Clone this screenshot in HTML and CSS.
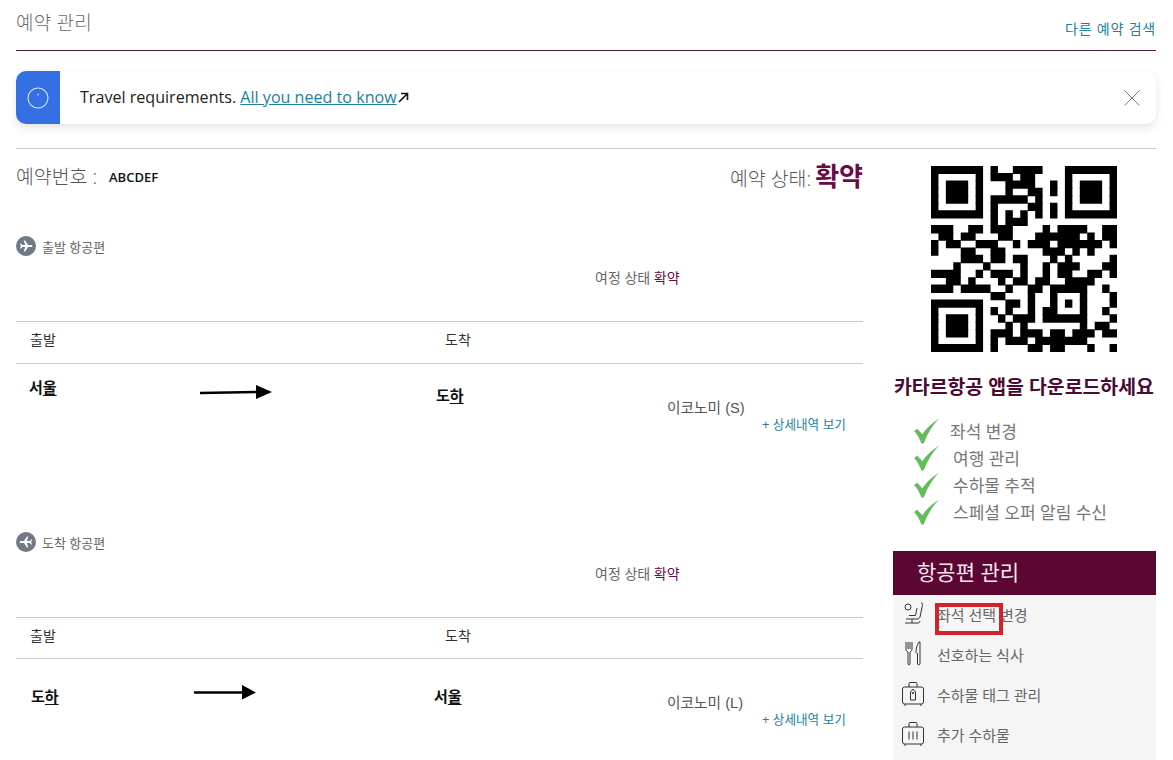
FILE: index.html
```html
<!DOCTYPE html>
<html lang="ko">
    <head>
        <meta charset="utf-8">
        <title>예약 관리</title>
        <link rel="stylesheet" href="styles.css">
    </head>
    <body>
        <div class="top_bar">
            <h1 class="page_title">예약 관리</h1>
            <a class="other_search" href="#">다른 예약 검색</a>
        </div>

        <div class="notice">
            <div class="notice_icon">
                <svg width="22" height="22" viewBox="0 0 22 22" fill="none" stroke="#dbe6fb" stroke-width="1.1"><circle cx="11" cy="11" r="10"/><path d="M11 6.5v2"/></svg>
            </div>
            <p class="notice_text">Travel requirements. <a href="#">All you need to know</a><svg class="ext_arrow" width="11" height="11" viewBox="0 0 11 11" fill="none" stroke="#111" stroke-width="1.6"><path d="M1 10 9.5 1.5M3 1.5h6.5V8"/></svg></p>
            <svg class="notice_close" width="16" height="16" viewBox="0 0 16 16" fill="none" stroke="#777" stroke-width="1"><path d="M.5.5l15 15M15.500.5l-15 15"/></svg>
        </div>

        <div class="columns">
            <div class="main_col">
                <div class="booking_row">
                    <div class="booking_ref"><span class="big_label">예약번호 :</span><b class="ref_code">ABCDEF</b></div>
                    <div class="booking_state"><span class="big_label">예약 상태:</span> <b class="state_value">확약</b></div>
                </div>

                <section class="flight">
                    <div class="flight_label">
                        <svg class="plane_icon" width="20" height="20" viewBox="0 0 20 20"><circle cx="10" cy="10" r="10" fill="#6f7a85"/><path fill="#fff" d="M16.500 10c0-.7-.9-1.100-1.800-1.100h-2.600L9 4.400H7.700l1.500 4.500H6.300L5 7.400H4l.8 2.600L4 12.600h1l1.300-1.500h2.900L7.700 15.600H9l3.100-4.500h2.600c.9 0 1.800-.4 1.800-1.100z"/></svg>
                        출발 항공편
                    </div>
                    <div class="leg_state">여정 상태 <span class="leg_ok">확약</span></div>
                    <div class="leg_head"><span>출발</span><span>도착</span></div>
                    <div class="leg_row">
                        <div class="city">서<u>울</u></div>
                        <svg class="arrow" width="72" height="16" viewBox="0 0 72 16"><path d="M0 9 56 8" stroke="#000" stroke-width="2.500"/><path d="M56 1l16 7-16 7z"/></svg>
                        <div class="city city_low">도<u>하</u></div>
                        <div class="cabin">
                            <div>이코노미 (S)</div>
                            <a class="details" href="#">+ 상세내역 보기</a>
                        </div>
                    </div>
                </section>

                <section class="flight flight_back">
                    <div class="flight_label">
                        <svg class="plane_icon" width="20" height="20" viewBox="0 0 20 20"><circle cx="10" cy="10" r="10" fill="#6f7a85"/><path fill="#fff" d="M3.500 10c0-.7.9-1.100 1.800-1.100h2.600L11 4.400h1.300l-1.500 4.500h2.900L15 7.400h1l-.8 2.600.8 2.600h-1l-1.300-1.500h-2.900l1.500 4.500H11l-3.100-4.500H5.300c-.9 0-1.800-.4-1.800-1.100z"/></svg>
                        도착 항공편
                    </div>
                    <div class="leg_state">여정 상태 <span class="leg_ok">확약</span></div>
                    <div class="leg_head"><span>출발</span><span>도착</span></div>
                    <div class="leg_row leg_row_back">
                        <div class="city">도<u>하</u></div>
                        <svg class="arrow" width="62" height="16" viewBox="0 0 62 16"><path d="M0 8.500h48" stroke="#000" stroke-width="2.500"/><path d="M48 1l14 7.500-14 7z"/></svg>
                        <div class="city">서<u>울</u></div>
                        <div class="cabin">
                            <div>이코노미 (L)</div>
                            <a class="details" href="#">+ 상세내역 보기</a>
                        </div>
                    </div>
                </section>
            </div>

            <aside class="side_col">
                <svg class="qr" width="186" height="186" viewBox="0 0 25 25" fill="none" stroke="#000" stroke-width="1.120">
                    <path d="M0 .5h7M8 .5h1M11 .5h4M18 .5h7"/>
                    <path d="M0 1.500h1M6 1.500h1M8 1.500h3M12 1.500h2M18 1.500h1M24 1.500h1"/>
                    <path d="M0 2.500h1M2 2.500h3M6 2.500h1M10 2.500h4M16 2.500h1M18 2.500h1M20 2.500h3M24 2.500h1"/>
                    <path d="M0 3.500h1M2 3.500h3M6 3.500h1M10 3.500h1M13 3.500h2M16 3.500h1M18 3.500h1M20 3.500h3M24 3.500h1"/>
                    <path d="M0 4.500h1M2 4.500h3M6 4.500h1M8 4.500h5M14 4.500h1M18 4.500h1M20 4.500h3M24 4.500h1"/>
                    <path d="M0 5.500h1M6 5.500h1M8 5.500h1M13 5.500h2M16 5.500h1M18 5.500h1M24 5.500h1"/>
                    <path d="M0 6.500h7M8 6.500h1M10 6.500h1M12 6.500h1M14 6.500h1M16 6.500h1M18 6.500h7"/>
                    <path d="M8 7.500h1M10 7.500h3"/>
                    <path d="M0 8.500h3M5 8.500h2M8 8.500h3M15 8.500h1M17 8.500h4M23 8.500h2"/>
                    <path d="M1 9.500h2M4 9.500h2M9 9.500h2M14 9.500h6M21 9.500h1M23 9.500h2"/>
                    <path d="M0 10.500h1M2 10.500h2M6 10.500h3M11 10.500h1M13 10.500h3M17 10.500h6M24 10.500h1"/>
                    <path d="M0 11.500h1M4 11.500h2M8 11.500h2M15 11.500h3M19 11.500h1M21 11.500h1"/>
                    <path d="M4 12.500h3M8 12.500h2M11 12.500h2M16 12.500h1M18 12.500h1M24 12.500h1"/>
                    <path d="M3 13.500h1M7 13.500h1M12 13.500h1M15 13.500h1M17 13.500h3M23 13.500h2"/>
                    <path d="M0 14.500h4M6 14.500h1M8 14.500h3M12 14.500h1M15 14.500h1M17 14.500h2M21 14.500h2M24 14.500h1"/>
                    <path d="M2 15.500h2M5 15.500h1M9 15.500h1M11 15.500h2M14 15.500h2M18 15.500h4"/>
                    <path d="M0 16.500h3M4 16.500h4M10 16.500h1M13 16.500h2M16 16.500h5M23 16.500h1"/>
                    <path d="M8 17.500h2M13 17.500h1M16 17.500h1M20 17.500h1M24 17.500h1"/>
                    <path d="M0 18.500h7M10 18.500h2M13 18.500h1M16 18.500h1M18 18.500h1M20 18.500h1M24 18.500h1"/>
                    <path d="M0 19.500h1M6 19.500h1M8 19.500h1M10 19.500h1M13 19.500h1M15 19.500h2M20 19.500h1M23 19.500h1"/>
                    <path d="M0 20.500h1M2 20.500h3M6 20.500h1M9 20.500h1M11 20.500h3M15 20.500h6M24 20.500h1"/>
                    <path d="M0 21.500h1M2 21.500h3M6 21.500h1M10 21.500h1M12 21.500h1M20 21.500h1M22 21.500h2"/>
                    <path d="M0 22.500h1M2 22.500h3M6 22.500h1M8 22.500h3M12 22.500h3M16 22.500h2M19 22.500h3M23 22.500h2"/>
                    <path d="M0 23.500h1M6 23.500h1M8 23.500h1M10 23.500h3M14 23.500h7"/>
                    <path d="M0 24.500h7M8 24.500h1M13 24.500h2M16 24.500h2M21 24.500h1M24 24.500h1"/>
                </svg>
                <h2 class="app_title">카타르항공 앱을 다운로드하세요</h2>
                <ul class="app_list">
                    <li><svg class="check" width="26" height="26" viewBox="0 0 28 27"><path fill="#62bd5a" d="M0 13.500 3.500 11l5.500 6C13 11 19 5 27 0 20 7 14.500 16 10.500 27H8C6 21.500 3.500 17 0 13.500z"/></svg>좌석 변경</li>
                    <li class="nudge"><svg class="check" width="26" height="26" viewBox="0 0 28 27"><path fill="#62bd5a" d="M0 13.500 3.500 11l5.500 6C13 11 19 5 27 0 20 7 14.500 16 10.500 27H8C6 21.500 3.500 17 0 13.500z"/></svg>여행 관리</li>
                    <li class="nudge"><svg class="check" width="26" height="26" viewBox="0 0 28 27"><path fill="#62bd5a" d="M0 13.500 3.500 11l5.500 6C13 11 19 5 27 0 20 7 14.500 16 10.500 27H8C6 21.500 3.500 17 0 13.500z"/></svg>수하물 추적</li>
                    <li class="nudge"><svg class="check" width="26" height="26" viewBox="0 0 28 27"><path fill="#62bd5a" d="M0 13.500 3.500 11l5.500 6C13 11 19 5 27 0 20 7 14.500 16 10.500 27H8C6 21.500 3.500 17 0 13.500z"/></svg>스페셜 오퍼 알림 수신</li>
                </ul>
                <div class="manage">
                    <div class="manage_head">항공편 관리</div>
                    <ul class="manage_list">
                        <li>
                            <svg width="24" height="24" viewBox="0 0 24 24" fill="none" stroke="#333" stroke-width="1"><circle cx="7" cy="5" r="3"/><path d="M20 1c1.500 0 1.800 1 1.400 2.500L19 15c-.4 1.500-1.500 2-3 2H5M16 6l-1.500 7.500H8M4 21h13c1 0 1.500-.5 2-2M11 17v4"/></svg>
                            좌석 선택 변경
                            <span class="red_box"></span>
                        </li>
                        <li>
                            <svg width="24" height="26" viewBox="0 0 24 26" fill="none" stroke="#333" stroke-width="1"><path d="M5 1v7c0 1.500 1 2.500 2 3v12c0 1 2 1 2 0V11c1-.5 2-1.500 2-3V1M7 1v7M9 1v7M18 1c-2 3-3 6-3 10 0 1 .5 1.500 1.500 1.500V23c0 1 2.500 1 2.500 0V1z"/></svg>
                            선호하는 식사
                        </li>
                        <li>
                            <svg width="24" height="26" viewBox="0 0 24 26" fill="none" stroke="#333" stroke-width="1"><rect x="1.500" y="6" width="21" height="17" rx="2"/><path d="M8 6V2.500c0-.8.5-1 1-1h6c.5 0 1 .2 1 1V6M4 23v2M20 23v2M9.500 11 12 8l2.500 3v8h-5z"/><circle cx="12" cy="12" r=".8"/></svg>
                            수하물 태그 관리
                        </li>
                        <li>
                            <svg width="24" height="26" viewBox="0 0 24 26" fill="none" stroke="#333" stroke-width="1"><rect x="1.500" y="6" width="21" height="17" rx="2"/><path d="M8 6V2.500c0-.8.5-1 1-1h6c.5 0 1 .2 1 1V6M4 23v2M20 23v2M8 10.500v8M12 10.500v8M16 10.500v8"/></svg>
                            추가 수하물
                        </li>
                    </ul>
                </div>
            </aside>
        </div>
    </body>
</html>
```

FILE: styles.css
```css
html, body {
    height: 760px;
    overflow: hidden;
}

body {
    margin: 0;
    padding: 0 17px 0 16px;
    background: #fff;
    color: #333;
    font-family: "Open Sans", "Noto Sans CJK KR", sans-serif;
}

a {
    color: #1f7f9c;
    text-decoration: none;
}

ul {
    margin: 0;
    padding: 0;
    list-style: none;
}

u {
    text-underline-offset: 2px;
}

.top_bar {
    display: flex;
    justify-content: space-between;
    height: 50px;
    border-bottom: 1px solid #5c1a3a;
}

.page_title {
    margin: 9px 0 0;
    font-size: 19px;
    font-weight: 300;
    line-height: 28px;
    letter-spacing: 0.2px;
    color: #6a6a6a;
}

.other_search {
    margin-top: 19px;
    font-size: 14px;
    line-height: 20px;
    letter-spacing: 0.8px;
}

.notice {
    display: flex;
    align-items: center;
    height: 53px;
    margin-top: 20px;
    border-radius: 10px;
    box-shadow: 0 4px 10px rgba(0, 0, 0, 0.1);
    background: #fff;
}

.notice_icon {
    display: flex;
    align-items: center;
    justify-content: center;
    width: 44px;
    height: 100%;
    border-radius: 10px 0 0 10px;
    background: #3470e4;
}

.notice_text {
    flex: 1;
    margin: 0 0 2px 20px;
    font-size: 16.1px;
    color: #222;
}

.notice_text a {
    color: #1f7f9c;
    text-decoration: underline;
}

.ext_arrow {
    margin-left: 1px;
}

.notice_close {
    margin-right: 16px;
}

.columns {
    display: flex;
    justify-content: space-between;
    margin-top: 24px;
    border-top: 1px solid #c8c8c8;
}

.main_col {
    width: 847px;
}

.side_col {
    width: 263px;
}

.booking_row {
    display: flex;
    justify-content: space-between;
    align-items: center;
    height: 28px;
    margin-top: 12px;
}

.big_label {
    font-size: 19.4px;
    font-weight: 300;
    color: #555;
}

.ref_code {
    margin-left: 12px;
    font-size: 13px;
    font-weight: 600;
    vertical-align: 2px;
    color: #111;
}

.state_value {
    font-size: 26px;
    font-weight: 700;
    color: #6a0a4a;
}

.flight {
    margin-top: 47px;
}

.flight_back {
    margin-top: 100px;
}

.flight_label {
    display: flex;
    align-items: center;
    gap: 6px;
    height: 20px;
    font-size: 13px;
    color: #666;
}

.plane_icon {
    flex: none;
}

.leg_state {
    height: 20px;
    margin: 12px 0 0 579px;
    font-size: 14px;
    line-height: 20px;
    color: #666;
}

.leg_ok {
    color: #6a0a4a;
}

.leg_head {
    display: grid;
    grid-template-columns: 415px 1fr;
    height: 41px;
    margin-top: 33px;
    padding-left: 14px;
    border-top: 1px solid #ccc;
    border-bottom: 1px solid #ccc;
    font-size: 14px;
    line-height: 36px;
    color: #333;
}

.flight_back .leg_head {
    height: 40px;
}

.leg_row {
    display: grid;
    grid-template-columns: 184px 236px 231px 1fr;
    align-items: start;
}

.leg_row_back {
    grid-template-columns: 178px 240px 233px 1fr;
}

.leg_row .city {
    margin-top: 11px;
    padding-left: 13px;
    font-size: 15px;
    font-weight: 700;
    line-height: 24px;
    color: #111;
}

.leg_row .city_low {
    margin-top: 19px;
    padding-left: 0;
}

.leg_row .arrow {
    margin-top: 20px;
}

.leg_row_back .city {
    margin-top: 25px;
    padding-left: 15px;
}

.leg_row_back .arrow {
    margin-top: 25px;
}

.leg_row_back .city + .arrow + .city {
    padding-left: 0;
}

.cabin {
    margin-top: 34px;
    font-family: "Liberation Sans", "Noto Sans CJK KR", sans-serif;
    font-size: 14.7px;
    line-height: 20px;
    color: #555;
}

.details {
    display: block;
    margin-left: 95px;
    font-size: 12.6px;
    line-height: 14px;
}

.qr {
    display: block;
    margin: 17px 0 0 38px;
}

.app_title {
    margin: 23px 0 0 1px;
    font-size: 19.4px;
    font-weight: 700;
    line-height: 24px;
    white-space: nowrap;
    color: #4a0a33;
}

.app_list {
    margin: 18px 0 0 21px;
    font-size: 17px;
    color: #777;
}

.app_list li {
    display: flex;
    align-items: center;
    gap: 10px;
    height: 27px;
}

.app_list .nudge {
    gap: 13px;
}

.check {
    flex: none;
}

.manage {
    margin-top: 26px;
}

.manage_head {
    height: 44px;
    padding-left: 24px;
    background: #5c0632;
    font-size: 21px;
    line-height: 42px;
    color: #f3e8ee;
}

.manage_list {
    padding: 0 0 5px 8px;
    background: #f5f5f5;
    font-size: 15px;
    color: #666;
}

.manage_list li {
    position: relative;
    display: flex;
    align-items: center;
    gap: 12px;
    box-sizing: border-box;
    height: 40px;
    padding-bottom: 2px;
}

.red_box {
    position: absolute;
    left: 34px;
    top: 8px;
    width: 60px;
    height: 24px;
    border: 4px solid #d2232a;
}
```
